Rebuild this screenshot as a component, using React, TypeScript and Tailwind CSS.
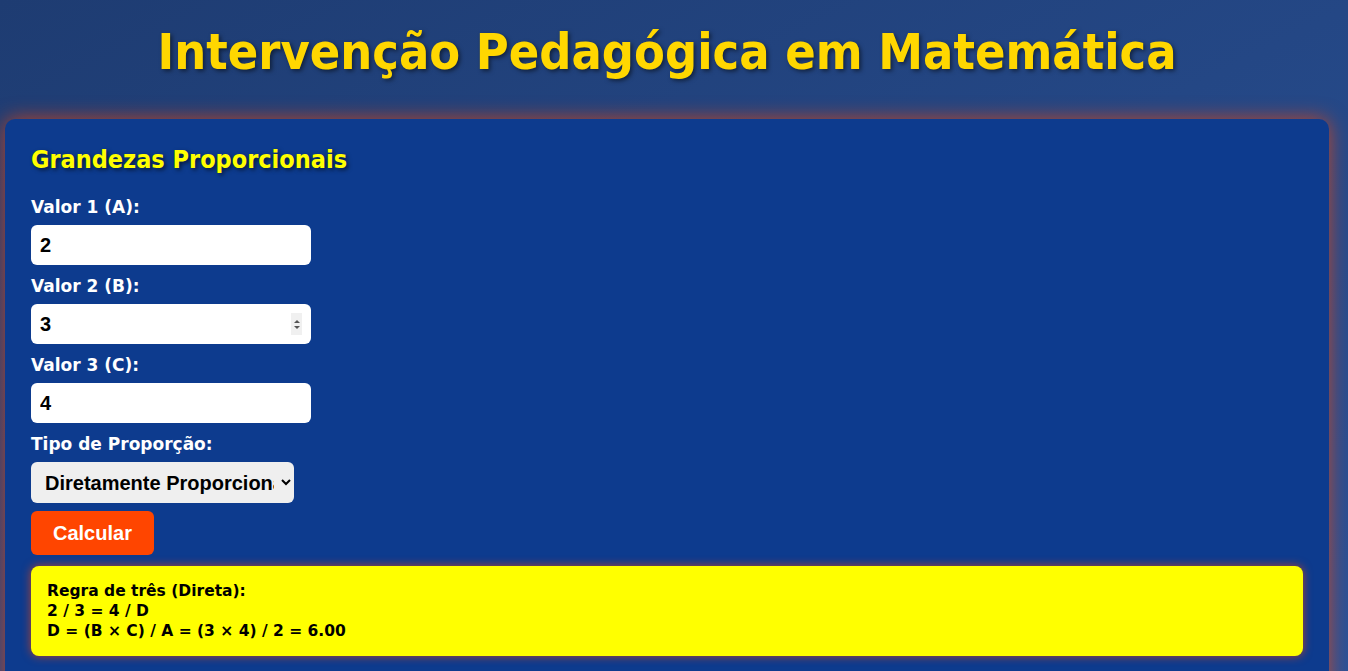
import { useState } from "react";

const font = { fontFamily: "Tahoma, 'DejaVu Sans', Verdana, sans-serif" };
const condensed = { fontFamily: "'DejaVu Sans Condensed', 'DejaVu Sans', sans-serif", fontStretch: "condensed" };
const arial = { fontFamily: "'Liberation Sans', Arial, sans-serif" };

const Field = ({ label, value, spinner }: { label: string; value: string; spinner?: boolean }) => (
  <div>
    <label className="block mt-[10px] mb-[7px] text-[17px] leading-[22px] font-bold text-white">{label}</label>
    <div className="relative w-[280px]">
      <input
        readOnly
        value={value}
        className="block w-[280px] h-10 rounded-md bg-white px-[9px] text-[20px] font-bold text-black outline-none"
        style={arial}
      />
      {spinner && (
        <div className="absolute right-[9px] top-[9px] flex h-[22px] w-[11px] flex-col items-center justify-center gap-[3px] bg-[#f0f0f0]">
          <span className="block h-0 w-0 border-x-[3px] border-b-[3px] border-x-transparent border-b-[#555]" />
          <span className="block h-0 w-0 border-x-[3px] border-t-[3px] border-x-transparent border-t-[#555]" />
        </div>
      )}
    </div>
  </div>
);

export default function App() {
  const [tipo, setTipo] = useState("direta");

  return (
    <div className="min-h-screen bg-linear-to-br from-[#1e3c72] to-[#2a5298] pl-[5px] pr-[19px]" style={font}>
      <h1
        className="pt-[19px] pb-[34px] text-center text-[50px] leading-[66px] font-bold text-[#ffd700] [text-shadow:2px_2px_4px_rgba(0,0,0,0.5)]"
        style={condensed}
      >
        Intervenção Pedagógica em Matemática
      </h1>
      <div className="rounded-[10px] bg-[#0d3b8e] px-[26px] pt-[24px] pb-10 shadow-[0_0_20px_rgba(255,69,0,0.7)]">
        <h2
          className="text-[25px] leading-[34px] font-bold text-[#ffff00] [text-shadow:2px_2px_4px_rgba(0,0,0,0.6)]"
          style={condensed}
        >
          Grandezas Proporcionais
        </h2>
        <div className="mt-[19px]">
          <Field label="Valor 1 (A):" value="2" />
          <Field label="Valor 2 (B):" value="3" spinner />
          <Field label="Valor 3 (C):" value="4" />
          <label className="block mt-[10px] mb-[7px] text-[17px] leading-[22px] font-bold text-white">
            Tipo de Proporção:
          </label>
          <select
            value={tipo}
            onChange={(e) => setTipo(e.target.value)}
            className="block h-[41px] w-[263px] rounded-md bg-[#efefef] pl-[10px] pr-1 text-[20px] font-bold text-black outline-none"
            style={arial}
          >
            <option value="direta">Diretamente Proporcional</option>
            <option value="inversa">Inversamente Proporcional</option>
          </select>
          <button
            className="mt-2 h-11 rounded-md bg-[#ff4500] px-[22px] text-[20px] font-bold text-white"
            style={arial}
          >
            Calcular
          </button>
          <div className="mt-[11px] rounded-lg bg-[#ffff00] px-4 py-[15px] text-[15.5px] leading-5 font-bold text-black shadow-[0_0_10px_rgba(255,69,0,0.7)]">
            Regra de três (Direta):
            <br />2 / 3 = 4 / D
            <br />D = (B × C) / A = (3 × 4) / 2 = 6.00
          </div>
        </div>
      </div>
    </div>
  );
}
